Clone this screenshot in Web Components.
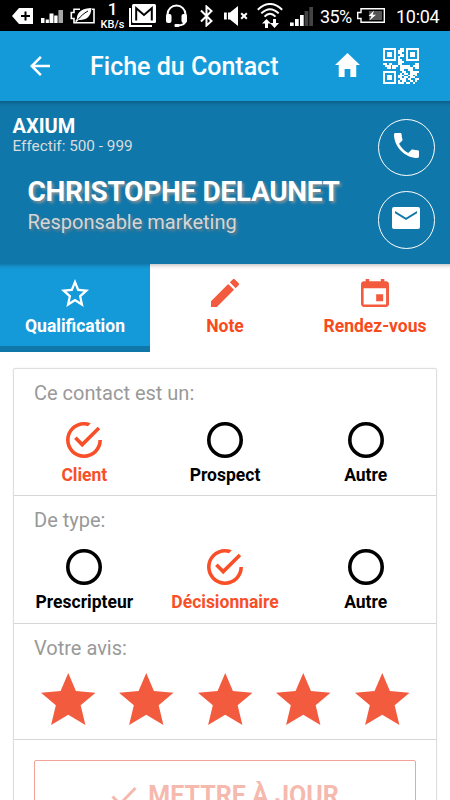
<!DOCTYPE html>
<html lang="fr">
<head>
<meta charset="utf-8">
<title>Fiche du Contact</title>
<style>
  body {
    margin: 0;
    width: 450px;
    height: 800px;
    overflow: hidden;
    background: #fff;
    font-family: Roboto, "Liberation Sans", sans-serif;
    --color-main: #159ad9;
    --color-main-dark: #1077aa;
    --color-accent: #f35b3e;
  }
</style>
</head>
<body>
<contact-page></contact-page>

<script>
const ICONS = {
  back: ['85 85 342 342', '<path d="M427 234.625H167.296l119.702-119.702L256 85 85 256l171 171 29.922-29.924-118.626-119.701H427v-42.75z"/>'],
  home: ['48 64 416 384', '<path d="M208 448V320h96v128h97.6V256H464L256 64 48 256h62.4v192z"/>'],
  call: ['64 64 384 384', '<path d="M426.666 330.667a250.385 250.385 0 0 1-75.729-11.729c-7.469-2.136-16-1.073-21.332 5.333l-46.939 46.928c-60.802-30.928-109.864-80-140.802-140.803l46.939-46.927c5.332-5.333 7.462-13.864 5.332-21.333-8.537-24.531-12.802-50.136-12.802-76.803C181.333 73.604 171.734 64 160 64H85.333C73.599 64 64 73.604 64 85.333 64 274.656 237.344 448 426.666 448 438.4 448 448 438.396 448 426.667V352c0-11.729-9.6-21.333-21.334-21.333z"/>'],
  mail: ['0 0 28 22', '<path fill-rule="evenodd" d="M2 0H26Q28 0 28 2V20Q28 22 26 22H2Q0 22 0 20V2Q0 0 2 0ZM3 4V6.2L14 13L25 6.2V4L14 10.8Z"/>'],
  starOutline: ['2 2 20 19', '<path d="M22 9.24l-7.19-.62L12 2 9.19 8.63 2 9.24l5.46 4.73L5.82 21 12 17.27 18.18 21l-1.63-7.03L22 9.24zM12 15.4l-3.76 2.27 1-4.28-3.32-2.88 4.38-.38L12 6.1l1.71 4.04 4.38.38-3.32 2.88 1 4.28L12 15.4z"/>'],
  edit: ['64 64 384 384', '<path d="M64 368v80h80l235.727-235.729-79.999-79.998L64 368zm377.602-217.602c8.531-8.531 8.531-21.334 0-29.865l-50.135-50.135c-8.531-8.531-21.334-8.531-29.865 0l-39.468 39.469 79.999 79.998 39.469-39.467z"/>'],
  calendar: ['64 64 384 384', '<path d="M368 272h-96v96h96v-96zm-32-208v32H176V64h-48v32h-24c-22 0-40 18-40 40v272c0 22 18 40 40 40h304c22 0 40-18 40-40V136c0-22-18-40-40-40h-24V64h-48zm72 348H100V190h308v222z"/>'],
  checked: ['48 48 416 416', '<path d="M170.718 216.482L141.6 245.6l93.6 93.6 208-208-29.118-29.118L235.2 279.918l-64.482-63.436zM422.4 256c0 91.518-74.883 166.4-166.4 166.4S89.6 347.518 89.6 256 164.482 89.6 256 89.6c15.6 0 31.2 2.082 45.764 6.241L334 62.4C310.082 53.039 283.041 48 256 48 141.6 48 48 141.6 48 256s93.6 208 208 208 208-93.6 208-208h-41.6z"/>'],
  unchecked: ['0 0 36 36', '<circle cx="18" cy="18" r="16.2" fill="none" stroke="currentColor" stroke-width="3.6"/>'],
  star: ['0 0 54 52', '<path d="M27 0L34.6 17.9L54 19.8L39.3 32.3L44 52L27 41.7L10 52L14.7 32.3L0 19.8L19.4 17.9Z"/>'],
  check: ['0 0 26 20', '<path d="M1.5 10.5L9 18L24.5 2" fill="none" stroke="currentColor" stroke-width="3"/>'],
  tagPlus: ['0 0 21 16', '<path d="M0 8L7 0H21V16H7Z"/><path d="M13.5 3.5V12.5M9 8H18" stroke="#000" stroke-width="2"/>'],
  bars: ['0 0 22 14', '<path d="M0 9h3.5v5H0zM4.7 10.5h3.2V14H4.7zM8.5 4.5h4V14h-4zM13.2 6.5h3.4V14h-3.4z"/><path d="M17.4 1H22v13h-4.6z" opacity=".65"/>'],
  ecoBattery: ['0 0 25 16', '<path d="M10 1.2H4V4.5H1.3V10.5H4V14.8H24V1.2H22" fill="none" stroke="currentColor" stroke-width="1.6"/><path d="M21.5 0C13 .5 7 3 6.8 11L5 13.3L6.5 14L8.5 12C16 12.5 21 9 21.5 0Z"/><path d="M8 11.5C11 8 13.5 5.5 18 3" fill="none" stroke="#000" stroke-width="1"/>'],
  gmail: ['0 0 27 23', '<path d="M1 4V22H23" fill="none" stroke="currentColor" stroke-width="2"/><path d="M4.5 0H25.5Q27 0 27 1.5V17.5Q27 19 25.5 19H4.5Q3 19 3 17.5V1.5Q3 0 4.5 0Z"/><path d="M7.2 16.5V4.2L15 11L22.8 4.2V16.5" fill="none" stroke="#000" stroke-width="2"/>'],
  headset: ['0 0 21 23', '<path d="M1.5 14V10.5A9 9 0 0 1 19.5 10.5V16C19.5 19.5 16 21.5 11 21.5" fill="none" stroke="currentColor" stroke-width="2"/><rect y="10" width="5.5" height="9" rx="2"/><rect x="15.5" y="10" width="5.5" height="9" rx="2"/><rect x="8.5" y="20" width="5" height="3" rx="1"/>'],
  bluetooth: ['0 0 13 22', '<path d="M1 5.5L11.5 16L6.5 20.5V1.5L11.5 6L1 16.5" fill="none" stroke="currentColor" stroke-width="2"/>'],
  mute: ['0 0 24 20', '<path d="M0 6.5H2.8V13.5H0ZM4 6.5H6L14 0V20L6 13.5H4Z"/><path d="M17.2 7.2L22.8 12.8M22.8 7.2L17.2 12.8" stroke="currentColor" stroke-width="2"/>'],
  wifi: ['0 0 26 25', '<g fill="none" stroke="currentColor" stroke-width="2"><path d="M.8 6.8Q13-4.8 25.2 6.8"/><path d="M4.3 10.4Q13 2 21.7 10.4"/><path d="M7.5 13.6Q13 8 18.5 13.6"/></g><path d="M9.5 16L14 20.5H11V25H8V20.5H5Z"/><path d="M16 16H19V20H22L17.5 25L13 20H16Z"/>'],
  signal: ['0 0 23 19', '<path d="M0 15.5h3.7V19H0zM5 12h3.7v7H5zM10 8h3.7v11H10z"/><path d="M14.6 4h3.7v15h-3.7zM19.3 0H23v19h-3.7z" fill="#444"/>'],
  charging: ['0 0 28 15', '<path d="M4 .7H27.3V14.3H4V10.5H.7V4.5H4Z" fill="none" stroke="currentColor" stroke-width="1.4"/><path d="M12 3H25V12H12Z" fill="#555"/><path d="M17 2.5L11.5 8H14.5L12.5 12.5L19 6.8H15.7Z"/>']
};

// 19 x 19 modules of the toolbar code
const QR = [
  '#######..##.#######',
  '#.....#.###.#.....#',
  '#.###.#.##..#.###.#',
  '#.###.#..##.#.###.#',
  '#.###.#.###.#.###.#',
  '#.....#.#...#.....#',
  '#######.##..#######',
  '........###........',
  '##.##...##.......##',
  '.###.###.#####..###',
  '..##.##..#######.##',
  '.........##..###...',
  '#######...##..#####',
  '#.....#..#.##.####.',
  '#.###.#.###..###.#.',
  '#.###.#.##.##.###..',
  '#.###.#..###.##..##',
  '#.....#.#.##..##.#.',
  '#######.###.##..#..'
];
ICONS.qr = ['0 0 19 19', '<path shape-rendering="crispEdges" d="' + QR.map((row, y) =>
  [...row].map((c, x) => c === '#' ? `M${x} ${y}h1v1h-1z` : '').join('')).join('') + '"/>'];

class AppIcon extends HTMLElement {
  constructor() {
    super();
    this.attachShadow({ mode: 'open' });
  }

  connectedCallback() {
    const [box, shape] = ICONS[this.getAttribute('name')];
    this.shadowRoot.innerHTML = `
      <style>
        :host { display: block; flex: none; }
        svg { display: block; width: 100%; height: 100%; fill: currentColor; }
      </style>
      <svg viewBox="${box}" preserveAspectRatio="none">${shape}</svg>
    `;
    this.style.width = this.getAttribute('w') + 'px';
    this.style.height = this.getAttribute('h') + 'px';
  }
}
customElements.define('app-icon', AppIcon);

class StatusBar extends HTMLElement {
  constructor() {
    super();
    this.attachShadow({ mode: 'open' });
    this.shadowRoot.innerHTML = `
      <style>
        :host {
          display: flex;
          align-items: center;
          box-sizing: border-box;
          height: 31px;
          padding-left: 12px;
          background: #000;
          color: #fff;
          white-space: nowrap;
        }
        .rate { width: 27px; margin: 0 3px 0 4px; text-align: center; }
        .rate b { display: block; font: 500 17px/18px Roboto, sans-serif; }
        .rate span { display: block; font: 500 11px/13px Roboto, sans-serif; }
        .text { font-size: 18px; line-height: 31px; margin-top: 2px; }
      </style>
      <app-icon name="tagPlus" w="21" h="16"></app-icon>
      <app-icon name="bars" w="22" h="14" style="margin-left:8px"></app-icon>
      <app-icon name="ecoBattery" w="25" h="16" style="margin-left:7px"></app-icon>
      <div class="rate"><b>1</b><span>KB/s</span></div>
      <app-icon name="gmail" w="27" h="23"></app-icon>
      <app-icon name="headset" w="21" h="23" style="margin-left:10px"></app-icon>
      <app-icon name="bluetooth" w="13" h="22" style="margin-left:13px"></app-icon>
      <app-icon name="mute" w="24" h="20" style="margin-left:11px"></app-icon>
      <app-icon name="wifi" w="26" h="25" style="margin-left:9px"></app-icon>
      <app-icon name="signal" w="23" h="19" style="margin:2px 0 0 7px"></app-icon>
      <span class="text" style="margin-left:7px;width:37px;letter-spacing:-.6px">35%</span>
      <app-icon name="charging" w="28" h="15"></app-icon>
      <span class="text" style="margin-left:11px;letter-spacing:-.3px">10:04</span>
    `;
  }
}
customElements.define('status-bar', StatusBar);

class AppToolbar extends HTMLElement {
  constructor() {
    super();
    this.attachShadow({ mode: 'open' });
    this.shadowRoot.innerHTML = `
      <style>
        :host {
          display: flex;
          align-items: center;
          box-sizing: border-box;
          height: 70px;
          padding: 0 31px 0 30px;
          background: var(--color-main);
          color: #fff;
        }
        h1 { flex: 1; margin: 2px 0 0 40px; font-size: 25px; line-height: 30px; font-weight: 500; white-space: nowrap; }
      </style>
      <app-icon name="back" w="20" h="20"></app-icon>
      <h1><slot></slot></h1>
      <app-icon name="home" w="25" h="24" style="margin-top:-3px"></app-icon>
      <app-icon name="qr" w="36" h="36" style="margin-left:23px"></app-icon>
    `;
  }
}
customElements.define('app-toolbar', AppToolbar);

class ContactHeader extends HTMLElement {
  constructor() {
    super();
    this.attachShadow({ mode: 'open' });
    this.shadowRoot.innerHTML = `
      <style>
        :host {
          display: flex;
          justify-content: space-between;
          box-sizing: border-box;
          height: 163px;
          padding: 14px 15px 0 12.5px;
          background: linear-gradient(rgba(0,0,0,.22), rgba(0,0,0,.06) 3px, transparent 6px) var(--color-main-dark);
          color: #fff;
          white-space: nowrap;
        }
        .company { font-size: 20px; line-height: 22px; font-weight: 700; }
        .size { font-size: 15.3px; line-height: 18px; color: #dcdcdc; }
        .name { margin: 20px 0 0 15px; font-size: 28px; line-height: 34px; font-weight: 700; letter-spacing: -.3px; text-shadow: 2px 2px 3px rgba(150,150,150,.9); }
        .role { margin-left: 15px; font-size: 20px; line-height: 26px; color: #d5d5d5; text-shadow: 2px 2px 3px rgba(130,130,130,.8); }
        .actions { display: flex; flex-direction: column; gap: 15px; padding-top: 3.5px; }
        .round {
          display: flex;
          align-items: center;
          justify-content: center;
          box-sizing: border-box;
          width: 57.5px;
          height: 57.5px;
          padding-bottom: 4px;
          border: 1.5px solid #fff;
          border-radius: 50%;
        }
      </style>
      <div>
        <div class="company"><slot name="company"></slot></div>
        <div class="size"><slot name="size"></slot></div>
        <div class="name"><slot name="name"></slot></div>
        <div class="role"><slot name="role"></slot></div>
      </div>
      <div class="actions">
        <div class="round"><app-icon name="call" w="25" h="25"></app-icon></div>
        <div class="round"><app-icon name="mail" w="28" h="22"></app-icon></div>
      </div>
    `;
  }
}
customElements.define('contact-header', ContactHeader);

class AppTab extends HTMLElement {
  constructor() {
    super();
    this.attachShadow({ mode: 'open' });
  }

  connectedCallback() {
    this.shadowRoot.innerHTML = `
      <style>
        :host {
          display: flex;
          flex-direction: column;
          align-items: center;
          box-sizing: border-box;
          height: 88px;
          padding-top: 15px;
          background: linear-gradient(rgba(0,0,0,.2), rgba(0,0,0,.05) 3px, transparent 6px);
          color: var(--color-accent);
        }
        :host([active]) {
          background: linear-gradient(rgba(0,0,0,.2), rgba(0,0,0,.05) 3px, transparent 6px) var(--color-main);
          border-bottom: 6px solid var(--color-main-dark);
          color: #fff;
        }
        span { margin-top: 8px; font-size: 17.5px; line-height: 22px; font-weight: 700; color: var(--label, #f84a1c); }
        :host([active]) span { --label: #fff; }
      </style>
      <app-icon name="${this.getAttribute('icon')}" w="28" h="28"></app-icon>
      <span><slot></slot></span>
    `;
  }
}
customElements.define('app-tab', AppTab);

class FormSection extends HTMLElement {
  constructor() {
    super();
    this.attachShadow({ mode: 'open' });
    this.shadowRoot.innerHTML = `
      <style>
        :host { display: block; box-sizing: border-box; border-bottom: 1px solid #d6d6d6; }
        .title { padding: 12px 0 0 20px; font-size: 20px; line-height: 24px; color: #999; }
        .content { display: flex; }
      </style>
      <div class="title"><slot name="title"></slot></div>
      <div class="content"><slot></slot></div>
    `;
  }
}
customElements.define('form-section', FormSection);

class RadioChoice extends HTMLElement {
  constructor() {
    super();
    this.attachShadow({ mode: 'open' });
  }

  connectedCallback() {
    const icon = this.hasAttribute('checked') ? 'checked' : 'unchecked';
    this.shadowRoot.innerHTML = `
      <style>
        :host { display: flex; flex: 1 1 0; flex-direction: column; align-items: center; margin-top: 17px; color: #000; }
        :host([checked]) { color: #f84f28; }
        span { margin-top: 6px; font-size: 17.5px; line-height: 22px; font-weight: 700; }
      </style>
      <app-icon name="${icon}" w="36" h="36"></app-icon>
      <span><slot></slot></span>
    `;
  }
}
customElements.define('radio-choice', RadioChoice);

class StarRating extends HTMLElement {
  constructor() {
    super();
    this.attachShadow({ mode: 'open' });
  }

  connectedCallback() {
    const count = Number(this.getAttribute('value'));
    this.shadowRoot.innerHTML = `
      <style>
        :host { display: grid; flex: 1; grid-template-columns: repeat(5, 1fr); justify-items: center; padding: 13px 15px 0; color: var(--color-accent); }
      </style>
      ${'<app-icon name="star" w="54.5" h="52"></app-icon>'.repeat(count)}
    `;
  }
}
customElements.define('star-rating', StarRating);

class SubmitButton extends HTMLElement {
  constructor() {
    super();
    this.attachShadow({ mode: 'open' });
    this.shadowRoot.innerHTML = `
      <style>
        :host {
          display: flex;
          justify-content: center;
          align-items: center;
          gap: 11px;
          box-sizing: border-box;
          height: 71px;
          margin: 20px 20px 0;
          border: 1px solid #f3a397;
          border-radius: 2px;
          color: #f6b9ae;
          font-size: 25px;
          font-weight: 700;
          white-space: nowrap;
        }
      </style>
      <app-icon name="check" w="26" h="20"></app-icon>
      <span><slot></slot></span>
    `;
  }
}
customElements.define('submit-button', SubmitButton);

class ContactPage extends HTMLElement {
  constructor() {
    super();
    this.attachShadow({ mode: 'open' });
    this.shadowRoot.innerHTML = `
      <style>
        :host { display: block; height: 800px; overflow: hidden; }
        nav { display: grid; grid-template-columns: repeat(3, 1fr); }
        main {
          box-sizing: border-box;
          width: 424px;
          height: 500px;
          margin: 16px 0 0 13px;
          border: 1px solid #dedede;
          border-radius: 2px;
          box-shadow: 0 0 1px rgba(0,0,0,.2);
        }
      </style>
      <status-bar></status-bar>
      <app-toolbar>Fiche du Contact</app-toolbar>
      <contact-header>
        <span slot="company">AXIUM</span>
        <span slot="size">Effectif: 500 - 999</span>
        <span slot="name">CHRISTOPHE DELAUNET</span>
        <span slot="role">Responsable marketing</span>
      </contact-header>
      <nav>
        <app-tab icon="starOutline" active>Qualification</app-tab>
        <app-tab icon="edit">Note</app-tab>
        <app-tab icon="calendar">Rendez-vous</app-tab>
      </nav>
      <main>
        <form-section style="height:127px">
          <span slot="title">Ce contact est un:</span>
          <radio-choice checked>Client</radio-choice>
          <radio-choice>Prospect</radio-choice>
          <radio-choice>Autre</radio-choice>
        </form-section>
        <form-section style="height:128px">
          <span slot="title">De type:</span>
          <radio-choice>Prescripteur</radio-choice>
          <radio-choice checked>Décisionnaire</radio-choice>
          <radio-choice>Autre</radio-choice>
        </form-section>
        <form-section style="height:116px">
          <span slot="title">Votre avis:</span>
          <star-rating value="5"></star-rating>
        </form-section>
        <submit-button>METTRE À JOUR</submit-button>
      </main>
    `;
  }
}
customElements.define('contact-page', ContactPage);
</script>
</body>
</html>
